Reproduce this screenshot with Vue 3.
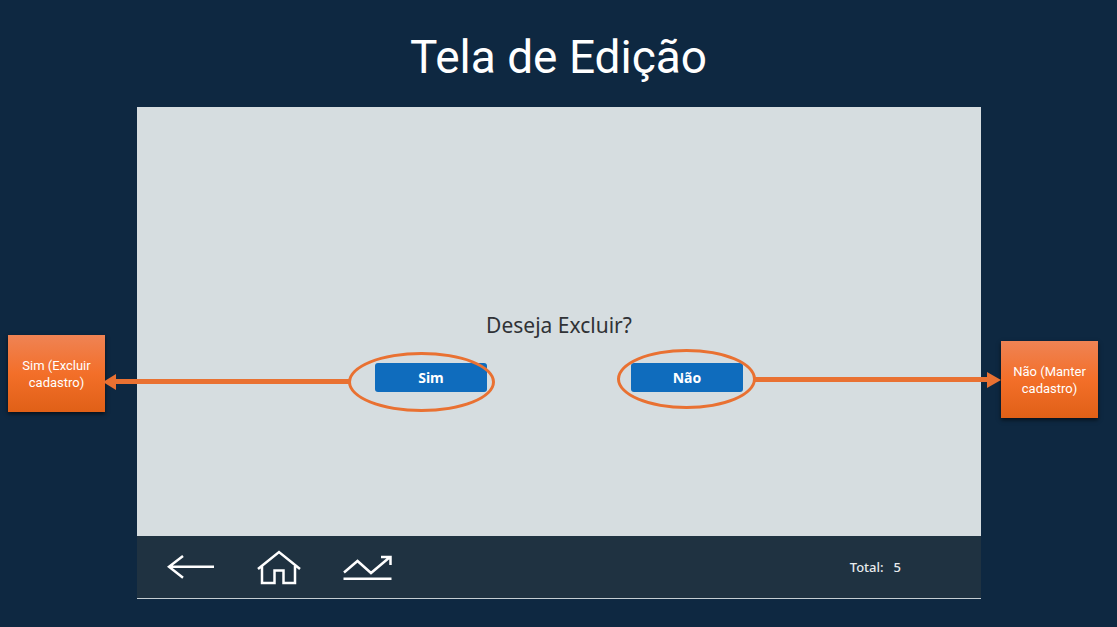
<script setup>
const total = 5
</script>

<template>
  <main class="slide">
    <h1 class="title">Tela de Edição</h1>
    <div class="board">
      <aside class="note note-yes">Sim (Excluir cadastro)</aside>

      <section class="panel">
        <div class="dialog">
          <p class="question">Deseja Excluir?</p>
          <div class="actions">
            <button type="button" class="choice">Sim</button>
            <button type="button" class="choice">Não</button>
          </div>
        </div>

        <footer class="toolbar">
          <nav class="tools">
            <button type="button" class="tool" aria-label="Voltar">
              <svg width="48" height="26" viewBox="0 0 48 26">
                <path d="M47 12.700H2M16 2L2 12.700l14 11" />
              </svg>
            </button>
            <button type="button" class="tool" aria-label="Início">
              <svg width="44" height="36" viewBox="0 0 44 36">
                <path d="M1 20L22 3l21 17M5 17v17h12.500V21.500h9V34H38V17" />
              </svg>
            </button>
            <button type="button" class="tool" aria-label="Relatórios">
              <svg width="50" height="28" viewBox="0 0 50 28">
                <path d="M1 19.500L14.500 8l13.500 12L47 4M38 4h9.500v8M.5 25.700h48" />
              </svg>
            </button>
          </nav>
          <p class="total"><span>Total:</span><span>{{ total }}</span></p>
        </footer>

        <span class="ring ring-yes"></span>
        <span class="ring ring-no"></span>
        <span class="arrow arrow-yes"></span>
        <span class="arrow arrow-no"></span>
      </section>

      <aside class="note note-no">Não (Manter cadastro)</aside>
    </div>
  </main>
</template>

<style>
body {
  margin: 0;
  background: #0e2841;
}
</style>

<style scoped>
.slide {
  box-sizing: border-box;
  min-height: 100vh;
  padding: 25px 0 28px;
  display: flex;
  flex-direction: column;
  background: #0e2841;
  color: #fff;
  overflow: hidden;
}
.title {
  margin: 0 0 18px;
  font: 400 46px/64px Roboto, "Liberation Sans", sans-serif;
  text-align: center;
}
.board {
  flex: 1;
  display: grid;
  grid-template-columns: 137px minmax(0, 1fr) 136px;
  align-items: start;
}
.note {
  box-sizing: border-box;
  width: 97px;
  min-height: 77px;
  padding: 0 4px;
  display: flex;
  align-items: center;
  justify-content: center;
  text-align: center;
  font: 400 13px/17px Roboto, "Liberation Sans", sans-serif;
  background: linear-gradient(#ef8354, #f36f29 50%, #e06017);
  box-shadow: 0 2px 4px rgba(0, 0, 0, 0.6);
}
.note-yes {
  margin: 228px 0 0 8px;
}
.note-no {
  margin: 234px 0 0 20px;
}
.panel {
  position: relative;
  align-self: stretch;
  display: flex;
  flex-direction: column;
  background: #d6dde0;
}
.dialog {
  flex: 1;
  padding-top: 204px;
  display: flex;
  flex-direction: column;
  align-items: center;
}
.question {
  margin: 0 0 24px;
  color: #303236;
  font: 400 21px/28px "Noto Sans", "Open Sans", sans-serif;
}
.actions {
  display: flex;
  gap: 144px;
}
.choice {
  width: 112px;
  height: 29px;
  padding: 0;
  border: 0;
  border-radius: 3px;
  background: #0f6cbd;
  color: #fff;
  font: 700 14px/29px "Noto Sans", "Open Sans", sans-serif;
}
.toolbar {
  box-sizing: border-box;
  height: 63px;
  padding: 0 80px 0 30px;
  display: flex;
  align-items: center;
  justify-content: space-between;
  background: #1f3241;
  border-bottom: 1px solid #c5cdd2;
}
.tools {
  display: flex;
  align-items: center;
  gap: 42px;
}
.tool {
  display: flex;
  padding: 0;
  border: 0;
  background: none;
}
.tool svg {
  fill: none;
  stroke: #fff;
  stroke-width: 2.5;
}
.total {
  display: flex;
  gap: 10px;
  margin: 0;
  color: #e8ebed;
  font: 500 13px/16px "Noto Sans", "Open Sans", sans-serif;
}
.ring {
  position: absolute;
  box-sizing: border-box;
  height: 60px;
  border: 3px solid #e97132;
  border-radius: 50%;
  pointer-events: none;
}
.ring-yes {
  top: 245px;
  right: calc(50% + 64px);
  width: 147px;
}
.ring-no {
  top: 242px;
  left: calc(50% + 58px);
  width: 139px;
}
.arrow {
  position: absolute;
  height: 5px;
  background: #e97132;
}
.arrow::after {
  content: "";
  position: absolute;
  top: -5px;
  border: solid transparent;
  border-width: 8px 0;
}
.arrow-yes {
  top: 272px;
  left: -21px;
  right: calc(50% + 210px);
}
.arrow-yes::after {
  right: 100%;
  border-right: 13px solid #e97132;
}
.arrow-no {
  top: 270px;
  left: calc(50% + 196px);
  right: -6px;
}
.arrow-no::after {
  left: 100%;
  border-left: 14px solid #e97132;
}
</style>
